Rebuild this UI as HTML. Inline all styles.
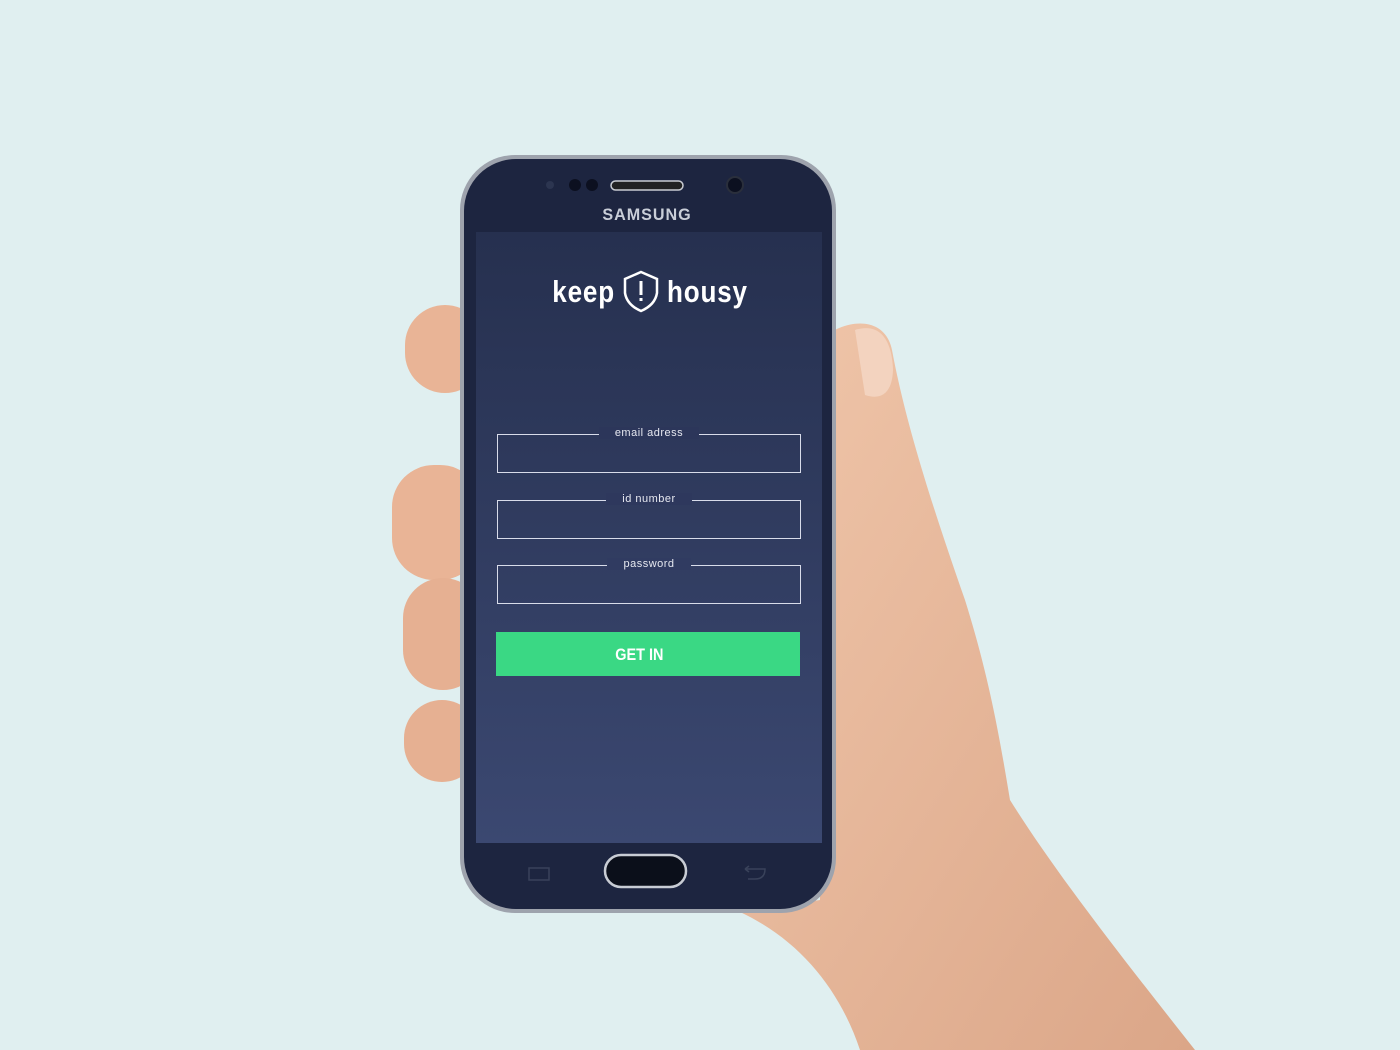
<!DOCTYPE html>
<html><head><style>
body{margin:0;width:1400px;height:1050px;background:#e0eff0;overflow:hidden;position:relative;font-family:"Liberation Sans",sans-serif}
.abs{position:absolute}
.field{position:absolute;left:497px;width:302px;height:37px;border:1.5px solid #d8dcea;}
.lab{position:absolute;left:0;width:100%;top:-8px;text-align:center;font-size:11px;color:#e6e8f0;letter-spacing:.5px}
.lab span{padding:0 16px}
</style></head><body>
<svg class="abs" style="left:0;top:0" width="1400" height="1050">
<defs><linearGradient id="sk" x1="0" y1="0" x2="1" y2="1"><stop offset="0" stop-color="#f0c6aa"/><stop offset="1" stop-color="#dba688"/></linearGradient>
<linearGradient id="scr" x1="0" y1="0" x2="0" y2="1"><stop offset="0" stop-color="#26304f"/><stop offset="1" stop-color="#3b4871"/></linearGradient></defs>
<path d="M820 340 C845 318 885 315 892 350 C905 420 930 500 965 600 C990 680 1000 740 1010 800 C1060 880 1140 980 1195 1050 L860 1050 C840 990 800 940 740 912 L820 900 Z" fill="url(#sk)"/>
<rect x="405" y="305" width="80" height="88" rx="40" fill="#e9b496"/>
<rect x="392" y="465" width="90" height="115" rx="42" fill="#e9b496"/>
<rect x="403" y="578" width="80" height="112" rx="40" fill="#e6b092"/>
<rect x="404" y="700" width="76" height="82" rx="38" fill="#e6b092"/>
<path d="M855 330 C880 322 892 340 893 370 C892 395 880 400 865 395 Z" fill="#f3d3bf"/>
<rect x="460" y="155" width="376" height="758" rx="55" fill="#9ea3ad"/>
<rect x="464" y="159" width="368" height="750" rx="52" fill="#1d2540"/>
<rect x="476" y="232" width="346" height="611" fill="url(#scr)"/>
<circle cx="550" cy="185" r="4" fill="#2c3550"/>
<circle cx="575" cy="185" r="6" fill="#0c1020"/><circle cx="592" cy="185" r="6" fill="#0c1020"/>
<rect x="611" y="181" width="72" height="9" rx="4.5" fill="#222" stroke="#c9ccd2" stroke-width="1.5"/>
<circle cx="735" cy="185" r="8" fill="#0c1020" stroke="#2a2f3c" stroke-width="2"/>
<text x="647" y="220" text-anchor="middle" font-family="Liberation Sans" font-weight="bold" font-size="17" fill="#c9ced8" letter-spacing="1" transform="translate(647 0) scale(0.95 1) translate(-647 0)">SAMSUNG</text>
<rect x="605" y="855" width="81" height="32" rx="16" fill="#0b0f1a" stroke="#c8ccd4" stroke-width="2.5"/>
<rect x="529" y="868" width="20" height="12" fill="none" stroke="#39425a" stroke-width="1.5"/>
<path d="M745 869 L765 869 Q765 879 755 879 L748 879 M745 869 l4 -3 M745 869 l4 3" fill="none" stroke="#39425a" stroke-width="1.5"/>
<path d="M641 272 L657 279 L657 293 Q655 305 641 311 Q627 305 625 293 L625 279 Z" fill="none" stroke="#fff" stroke-width="2.5"/>
<rect x="639.5" y="281" width="3" height="14" fill="#fff"/><rect x="639.5" y="298" width="3" height="3" fill="#fff"/>
<g transform="translate(615 0) scale(0.84 1) translate(-615 0)"><text x="615" y="302" text-anchor="end" font-family="Liberation Sans" font-weight="bold" font-size="31" fill="#fff" letter-spacing="1">keep</text></g>
<g transform="translate(667 0) scale(0.84 1) translate(-667 0)"><text x="667" y="302" font-family="Liberation Sans" font-weight="bold" font-size="31" fill="#fff" letter-spacing="1">housy</text></g>
</svg>
<div class="field" style="top:434px"><div class="lab"><span style="background:#2c365a">email adress</span></div></div>
<div class="field" style="top:500px"><div class="lab"><span style="background:#2e385d">id number</span></div></div>
<div class="field" style="top:565px"><div class="lab"><span style="background:#303b61">password</span></div></div>
<div class="abs" style="left:496px;top:632px;width:304px;height:44px;background:#3ad884;color:#fff;font-weight:bold;font-size:17px;line-height:46px;text-align:center;"><span style="display:inline-block;transform:scaleX(.85);margin-left:-18px">GET IN</span></div>
</body></html>
